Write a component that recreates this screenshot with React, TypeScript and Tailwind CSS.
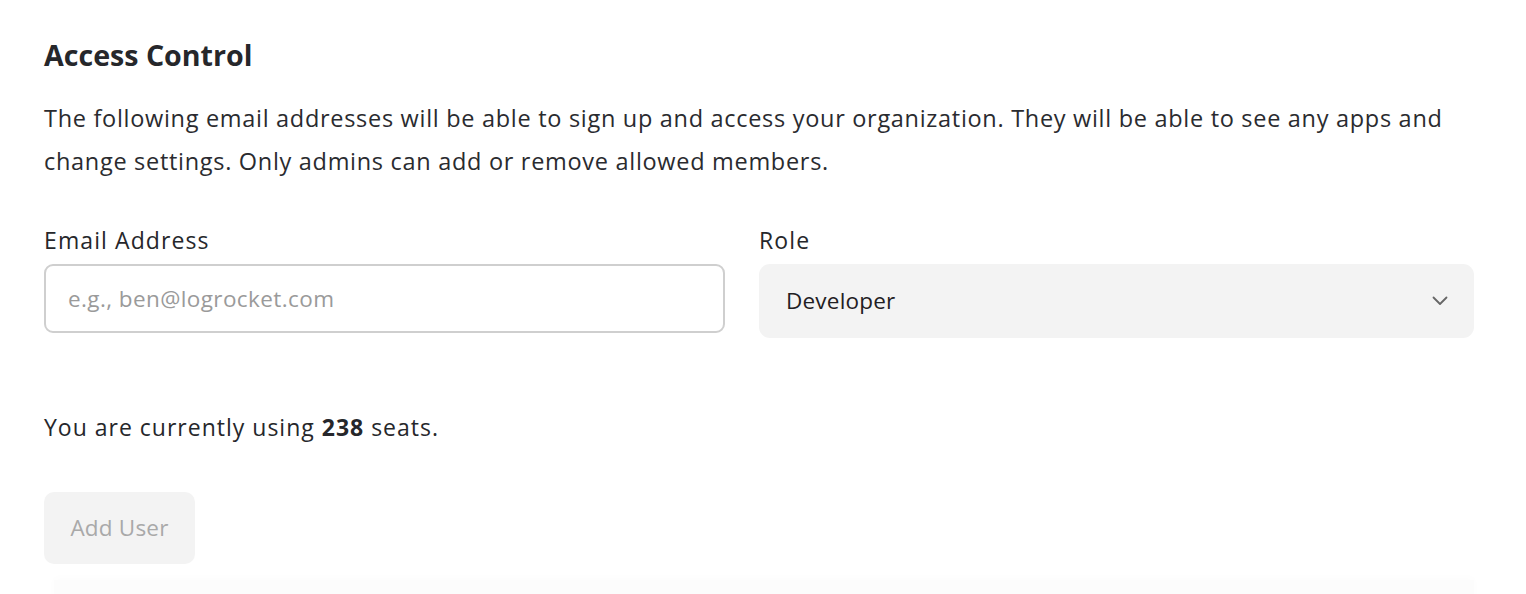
import React from "react";

export default function App() {
  return (
    <div
      className="w-[1526px] h-[594px] bg-white overflow-hidden text-[#26272b]"
      style={{ fontFamily: '"Open Sans", "Liberation Sans", sans-serif' }}
    >
      <div className="pl-[44px] pt-[36px] w-[1474px]">
        <h2 className="text-[28.6px] font-bold leading-[38px] tracking-[0px]">Access Control</h2>
        <p className="mt-[23px] text-[23.5px] leading-[43px] tracking-[0.7px] text-[#2a2b2f]">
          The following email addresses will be able to sign up and access your organization. They will be able to see any apps and change settings. Only admins can add or remove allowed members.
        </p>
        <div className="mt-[42px] flex gap-[34px]">
          <div className="w-[681px] flex flex-col">
            <label className="text-[23px] leading-[30px] font-medium tracking-[1.1px] text-[#26272b]">Email Address</label>
            <div className="mt-[9px] h-[69px] rounded-[9px] border-2 border-[#cfcfcf] flex items-center px-[22px]">
              <span className="text-[22.5px] tracking-[0.4px] text-[#9a9a9a]">e.g., ben@logrocket.com</span>
            </div>
          </div>
          <div className="w-[715px] flex flex-col">
            <label className="text-[23px] leading-[30px] font-medium tracking-[1.1px] text-[#26272b]">Role</label>
            <div className="mt-[9px] h-[74px] rounded-[11px] bg-[#f3f3f3] flex items-center justify-between pl-[27px] pr-[26px]">
              <span className="text-[22.5px] tracking-[0.2px] text-[#1f2023]">Developer</span>
              <svg width="16" height="10" viewBox="0 0 16 10" fill="none">
                <path d="M1.5 1.5 L8 8 L14.5 1.5" stroke="#666" strokeWidth="1.8" strokeLinecap="round" strokeLinejoin="round" />
              </svg>
            </div>
          </div>
        </div>
        <p className="mt-[74px] text-[23px] leading-[30px] tracking-[1px]">
          You are currently using <span className="font-bold">238</span> seats.
        </p>
        <button className="mt-[50px] w-[151px] h-[72px] rounded-[10px] bg-[#f3f3f3] text-[22.5px] tracking-[0.2px] text-[#a9a9a9]">
          Add User
        </button>
        <div className="mt-[16px] ml-[10px] h-[20px] bg-[#fcfcfc] shadow-[0_-2px_10px_rgba(0,0,0,0.015)]" />
      </div>
    </div>
  );
}
